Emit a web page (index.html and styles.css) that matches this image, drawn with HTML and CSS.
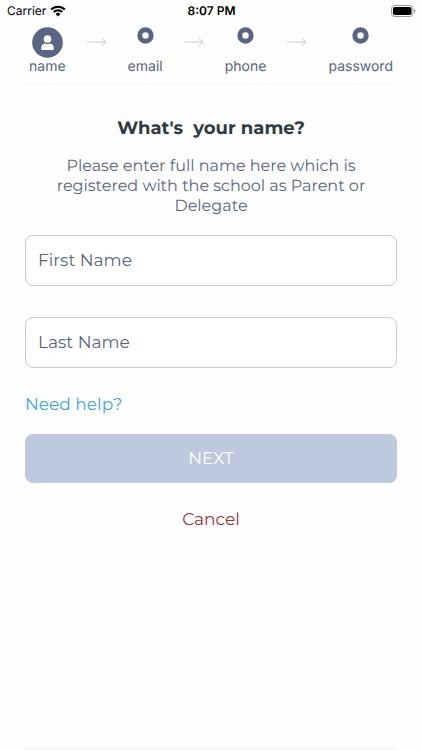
FILE: index.html
```html
<!DOCTYPE html>
<html lang="en">

<head>
    <meta charset="UTF-8">
    <meta name="viewport" content="width=device-width, initial-scale=1.0">
    <title>What's your name?</title>
    <link rel="stylesheet" href="styles.css">
</head>

<body>
    <div class="status-bar">
        <div class="carrier">
            <span>Carrier</span>
            <svg width="16" height="12" viewBox="0 0 16 12" aria-hidden="true">
                <path d="M1.2 4.6a9.6 9.6 0 0 1 13.6 0M3.7 7.1a6.1 6.1 0 0 1 8.6 0" fill="none" stroke="#000" stroke-width="2.1"/>
                <path d="M8 11.5 5.6 9a3.4 3.4 0 0 1 4.8 0z" fill="#000"/>
            </svg>
        </div>
        <span class="time">8:07 PM</span>
        <svg class="battery" width="25" height="12" viewBox="0 0 25 12" aria-hidden="true">
            <rect x="0.5" y="0.5" width="21.5" height="11" rx="3.2" fill="none" stroke="#999"/>
            <rect x="2" y="2" width="18.5" height="8" rx="1.8" fill="#000"/>
            <path d="M23.2 4v4c1.7-.7 1.7-3.3 0-4z" fill="#999"/>
        </svg>
    </div>

    <ol class="steps">
        <li class="step">
            <svg width="31" height="31" viewBox="0 0 31 31" aria-hidden="true">
                <circle cx="15.5" cy="15.5" r="15.3" fill="#5a6583"/>
                <circle cx="15.5" cy="12" r="3.8" fill="#fff"/>
                <path d="M9.3 22v-1.4c0-2.4 1.7-4.1 3.9-4.1 1.4.7 3.2.7 4.6 0 2.2 0 3.9 1.7 3.9 4.1V22c0 .6-.4 1-1 1H10.3c-.6 0-1-.4-1-1z" fill="#fff"/>
            </svg>
            <span>name</span>
        </li>
        <li class="arrow">
            <svg width="20" height="10" viewBox="0 0 20 10" aria-hidden="true">
                <path d="M0 5h19M14.5 1 19 5l-4.5 4" fill="none" stroke="#c6cbdc"/>
            </svg>
        </li>
        <li class="step">
            <svg width="17" height="17" viewBox="0 0 17 17" aria-hidden="true">
                <circle cx="8.5" cy="8.5" r="5.7" fill="none" stroke="#5a6583" stroke-width="5"/>
            </svg>
            <span>email</span>
        </li>
        <li class="arrow">
            <svg width="20" height="10" viewBox="0 0 20 10" aria-hidden="true">
                <path d="M0 5h19M14.5 1 19 5l-4.5 4" fill="none" stroke="#c6cbdc"/>
            </svg>
        </li>
        <li class="step">
            <svg width="17" height="17" viewBox="0 0 17 17" aria-hidden="true">
                <circle cx="8.5" cy="8.5" r="5.7" fill="none" stroke="#5a6583" stroke-width="5"/>
            </svg>
            <span>phone</span>
        </li>
        <li class="arrow">
            <svg width="20" height="10" viewBox="0 0 20 10" aria-hidden="true">
                <path d="M0 5h19M14.5 1 19 5l-4.5 4" fill="none" stroke="#c6cbdc"/>
            </svg>
        </li>
        <li class="step">
            <svg width="17" height="17" viewBox="0 0 17 17" aria-hidden="true">
                <circle cx="8.5" cy="8.5" r="5.7" fill="none" stroke="#5a6583" stroke-width="5"/>
            </svg>
            <span>password</span>
        </li>
    </ol>

    <main class="container">
        <h1>What's&nbsp; your name?</h1>
        <p class="intro">Please enter full name here which is registered with the school as Parent or Delegate</p>
        <form>
            <input type="text" placeholder="First Name" aria-label="First Name">
            <input type="text" placeholder="Last Name" aria-label="Last Name">
            <a class="help" href="#">Need help?</a>
            <button class="next" type="submit">NEXT</button>
            <button class="cancel" type="button">Cancel</button>
        </form>
    </main>
    <footer class="bottom-edge"></footer>
</body>

</html>
```
FILE: styles.css
```css
* {
    box-sizing: border-box;
}

body {
    display: flex;
    flex-direction: column;
    min-height: 100vh;
    margin: 0;
    background-color: #fefefe;
    color: #5a6583;
    font-family: Montserrat, Inter, sans-serif;
    font-size: 17px;
    text-rendering: geometricPrecision;
}

.status-bar {
    display: grid;
    grid-template-columns: 1fr auto 1fr;
    align-items: center;
    height: 22px;
    padding: 0 6px 1px 7px;
    color: #000;
    font-family: Inter, sans-serif;
    font-size: 12px;
}

.carrier {
    display: flex;
    align-items: center;
    gap: 4px;
}

.time {
    font-weight: 600;
}

.battery {
    justify-self: end;
}

.steps {
    display: flex;
    justify-content: space-between;
    margin: 0 24px;
    padding: 5px 5px 8px;
    border-bottom: 1px solid #f6f6f8;
    list-style: none;
    font-family: Inter, sans-serif;
    font-size: 14px;
    line-height: 18px;
}

.step {
    display: flex;
    flex-direction: column;
    align-items: center;
    justify-content: space-between;
    height: 49px;
}

.arrow {
    padding-top: 10px;
    line-height: 0;
}

.container {
    flex: 1;
    padding: 32px 25px;
}

h1 {
    margin: 0 0 18px;
    color: #303a43;
    font-size: 18px;
    font-weight: 700;
    line-height: 22px;
    text-align: center;
}

.intro {
    margin: 0 0 18px;
    padding: 0 20px;
    font-size: 16px;
    line-height: 20px;
    text-align: center;
}

form {
    display: flex;
    flex-direction: column;
}

input {
    width: 100%;
    height: 51px;
    margin-bottom: 31px;
    padding: 0 12px 2px;
    border: 1px solid #c5cade;
    border-radius: 8px;
    background-color: #fff;
    color: #5a6583;
    font: inherit;
}

input::placeholder {
    color: #5a6583;
    opacity: 1;
}

.help {
    align-self: flex-start;
    margin: -6px 0 17px;
    color: #45a3e0;
    line-height: 24px;
    text-decoration: none;
}

button {
    border: none;
    font: inherit;
    text-rendering: inherit;
    cursor: pointer;
}

.next {
    height: 49px;
    padding: 0;
    border-radius: 8px;
    background-color: #bec8df;
    color: #fff;
}

.cancel {
    align-self: center;
    margin-top: 25px;
    padding: 0;
    background: none;
    color: #a03038;
    line-height: 24px;
}

.bottom-edge {
    height: 4px;
    margin: 0 24px;
    background: linear-gradient(#fefefe, #f6f6f6);
}
```
